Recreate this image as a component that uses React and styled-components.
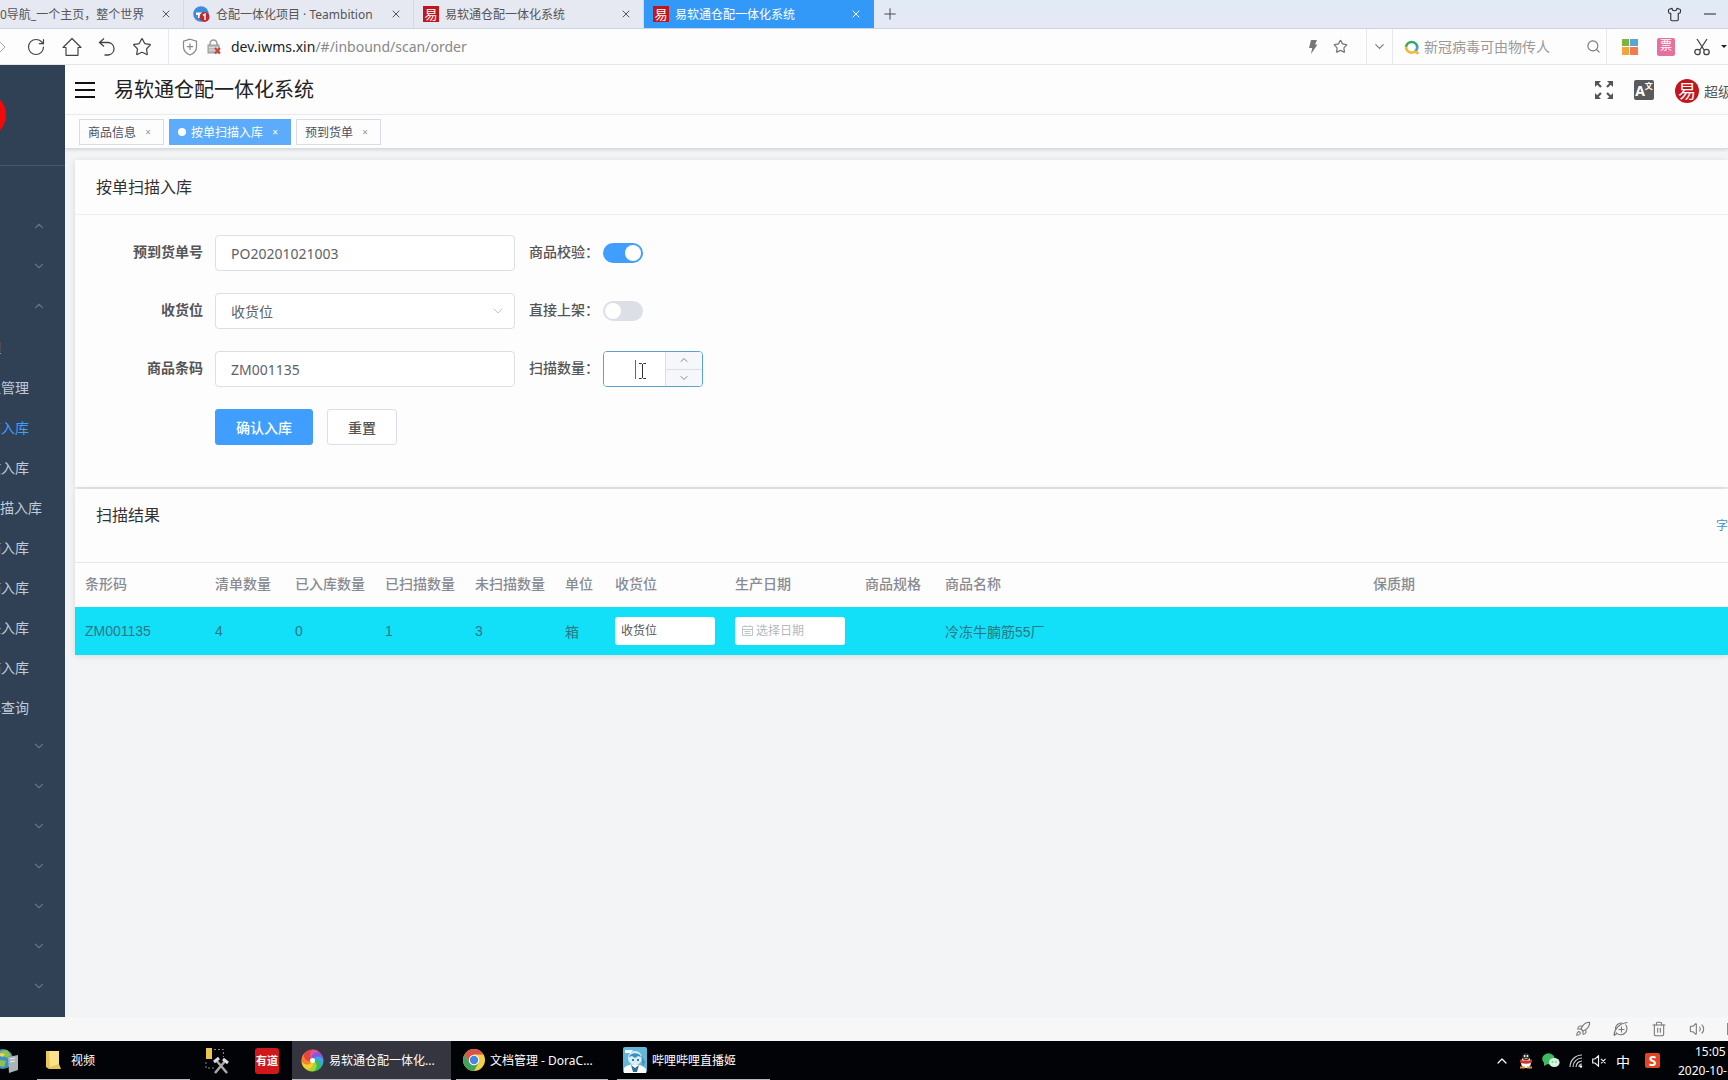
import React, { useState } from "react";
import styled, { createGlobalStyle, css } from "styled-components";
import {
  ChevronDown,
  ChevronUp,
  Plus,
  RotateCw,
  Search,
  Shirt,
  Star,
  Trash2,
  Rocket,
  Volume2,
  X,
} from "lucide-react";

const GlobalStyle = createGlobalStyle`
  * {
    box-sizing: border-box;
  }
  body {
    margin: 0;
    overflow: hidden;
    background: #f3f4f5;
  }
  body, input, button, select {
    font-family: "Noto Sans", "Noto Sans CJK SC", sans-serif;
  }
  button {
    padding: 0;
    border: 0;
    background: none;
    color: inherit;
    cursor: pointer;
  }
  svg {
    display: block;
    flex: none;
  }
`;

const browserTabs = [
  { title: "0导航_一个主页，整个世界", icon: null },
  { title: "仓配一体化项目 · Teambition", icon: "teambition" },
  { title: "易软通仓配一体化系统", icon: "seal" },
  { title: "易软通仓配一体化系统", icon: "seal", active: true },
];

const menu = [
  { arrow: "up" },
  { arrow: "down" },
  { arrow: "up" },
  { text: "管理", inset: 64 },
  { text: "位管理", inset: 36 },
  { text: "描入库", inset: 36, active: true },
  { text: "收入库", inset: 36 },
  { text: "描入库", inset: 23 },
  { text: "描入库", inset: 36 },
  { text: "描入库", inset: 36 },
  { text: "任入库", inset: 36 },
  { text: "描入库", inset: 36 },
  { text: "单查询", inset: 36 },
  { arrow: "down" },
  { arrow: "down" },
  { arrow: "down" },
  { arrow: "down" },
  { arrow: "down" },
  { arrow: "down" },
  { arrow: "down" },
];

const tags = [
  { title: "商品信息" },
  { title: "按单扫描入库", active: true },
  { title: "预到货单" },
];

const columns = [
  { title: "条形码", width: 130 },
  { title: "清单数量", width: 80 },
  { title: "已入库数量", width: 90 },
  { title: "已扫描数量", width: 90 },
  { title: "未扫描数量", width: 90 },
  { title: "单位", width: 50 },
  { title: "收货位", width: 120 },
  { title: "生产日期", width: 130 },
  { title: "商品规格", width: 80 },
  { title: "商品名称", width: 428 },
  { title: "保质期" },
];

/* ---------- icons ---------- */

const HomeIcon = () => (
  <svg width="20" height="20" viewBox="0 0 20 20" fill="none" stroke="#444" strokeWidth="1.2">
    <path d="M1 10.500 10 1.500 19 10.500H16V18.300H4V10.500Z" strokeLinejoin="round" />
  </svg>
);

const UndoIcon = () => (
  <svg width="18" height="20" viewBox="0 0 18 20" fill="none" stroke="#444" strokeWidth="1.300">
    <path d="M6 1.500 1.500 5.500 6 9.500M1.500 5.500H10.500A6.300 6.300 0 0 1 10.500 18H6.500" />
  </svg>
);

const ShieldIcon = () => (
  <svg width="16" height="18" viewBox="0 0 16 18" fill="none" stroke="#888" strokeWidth="1.200">
    <path d="M8 1.200 14.500 3.200V9C14.500 13 11.500 15.500 8 17 4.500 15.500 1.500 13 1.500 9V3.200Z" />
    <path d="M8 5.500V12M4.800 8.700H11.200" />
  </svg>
);

const LockIcon = () => (
  <svg width="15" height="16" viewBox="0 0 15 16">
    <path d="M3 7V4.500A3.500 3.500 0 0 1 10 4.500V7" fill="none" stroke="#999" strokeWidth="1.500" />
    <rect x="1" y="6" width="11" height="8" fill="#bbb" stroke="#999" />
    <path d="M2 8.500H11M2 11H11" stroke="#ddd" />
    <path d="M8 9 13 14.500M13 9 8 14.500" stroke="#c4473a" strokeWidth="2" />
  </svg>
);

const BoltIcon = () => (
  <svg width="10" height="14" viewBox="0 0 10 14" fill="#777">
    <path d="M3 0H9L7 4.500H9.500L3 14 4.200 8H1Z" />
  </svg>
);

const RingIcon = () => (
  <svg width="16" height="16" viewBox="0 0 16 16" fill="none" strokeWidth="2.600">
    <path d="M2 8A5.700 5.700 0 0 1 13.300 8" stroke="#2fa86b" />
    <path d="M13.300 7.500A5.700 5.700 0 0 1 10.500 12.700" stroke="#41a9d5" />
    <path d="M2 7.500A5.700 5.700 0 0 0 11 12.500L14.500 14.500" stroke="#f0b93a" />
  </svg>
);

const AppsIcon = () => (
  <svg width="16" height="16" viewBox="0 0 16 16">
    <rect width="7" height="7" fill="#7fb43c" />
    <rect x="8" width="8" height="7" fill="#58a5d8" />
    <rect y="8" width="7" height="8" fill="#f0a63e" />
    <rect x="8" y="8" width="8" height="8" fill="#ee7d52" />
  </svg>
);

const ScissorsIcon = () => (
  <svg width="16" height="18" viewBox="0 0 16 18" fill="none" stroke="#444" strokeWidth="1.300">
    <path d="M3 1 10.500 12.500M13 1 5.500 12.500" />
    <circle cx="3.500" cy="14" r="2.700" />
    <circle cx="12.500" cy="14" r="2.700" />
  </svg>
);

const TeambitionIcon = () => (
  <svg width="17" height="17" viewBox="0 0 17 17">
    <circle cx="8" cy="8" r="7.800" fill="#3b8ddb" />
    <path d="M3 6.500H9V9H7.500V12H5V9H3Z" fill="#fff" />
    <circle cx="11.500" cy="11" r="5" fill="#c3262b" />
    <path d="M10 9.500 12 8.200V14" stroke="#fff" strokeWidth="1.500" fill="none" />
  </svg>
);

const FullscreenIcon = () => (
  <svg width="18" height="18" viewBox="0 0 18 18" fill="#555" stroke="#555" strokeWidth="2.200">
    <path d="M0 0H6L0 6ZM18 0H12L18 6ZM0 18V12L6 18ZM18 18V12L12 18Z" stroke="none" />
    <path d="M2 2 6 6M16 2 12 6M2 16 6 12M16 16 12 12" />
  </svg>
);

const EdgeIcon = () => (
  <svg width="16" height="16" viewBox="0 0 16 16" fill="none" stroke="#777" strokeWidth="1.100">
    <path d="M12.500 3.500A6.200 6.200 0 1 1 3 11.500M2.500 8.500A6 6 0 0 1 9 2" />
    <path d="M1 14.500C1 9 6 2 14.500 1.500M1 14.500 4 12.500M5.500 8.500H11.500M8.500 5.500V11.500" />
  </svg>
);

const BeamCursor = styled.svg`
  position: absolute;
  left: 31px;
  top: 8px;
  pointer-events: none;
`;

const GlobeServerIcon = () => (
  <svg width="20" height="24" viewBox="0 0 20 24">
    <circle cx="3" cy="10" r="10" fill="#3c8ec4" />
    <path d="M0 2 7 1 11 6 7 9 2 6ZM0 11 6 12 4 18 0 17Z" fill="#8fc24c" />
    <path d="M0 4 5 5 3 8 0 7Z" fill="#eed460" />
    <path d="M8 8 18 6V21L9 24Z" fill="#aab3b8" />
    <path d="M10 10 15 9M10 13 15 12" stroke="#eee" />
  </svg>
);

const FolderIcon = () => (
  <svg width="16" height="20" viewBox="0 0 16 20">
    <path d="M0 1H13V14L15 19H3L0 17Z" fill="#e9c65a" />
    <path d="M3 1H13V14L4 17Z" fill="#f8e28c" />
  </svg>
);

const ToolsIcon = () => (
  <svg width="24" height="26" viewBox="0 0 24 26" fill="none">
    <rect x="1" width="6" height="11" fill="#ecc54e" />
    <path d="M9 1.500H18.500V9M1 14V20H9" stroke="#888" strokeDasharray="2 2" />
    <path d="M11 12 22 25M21 12 10 25" stroke="#aaa" strokeWidth="2.500" />
    <path d="M9 14 14 10M18 11 23 15" stroke="#ddd" strokeWidth="3" />
  </svg>
);

const PinwheelIcon = () => (
  <svg width="23" height="23" viewBox="0 0 23 23">
    {["#e0559b", "#8d55d3", "#39a7e5", "#35bd64", "#a8d331", "#f6d02e", "#f5822a", "#e4453f"].map(
      (fill, i) => (
        <path
          key={fill}
          d="M11.500 11.500C6 10 6 2 11.500 .5 15 .4 18 2 19.500 4 14 3 12 7 11.500 11.500Z"
          fill={fill}
          transform={`rotate(${i * 45} 11.500 11.500)`}
        />
      )
    )}
    <circle cx="11.500" cy="11.500" r="2.500" fill="#fff" />
  </svg>
);

const ChromeIcon = () => (
  <svg width="22" height="22" viewBox="0 0 22 22">
    <circle cx="11" cy="11" r="11" fill="#f3cf45" />
    <path d="M1.500 5.500A11 11 0 0 1 20.500 5.500H11L6.300 13.700Z" fill="#d9534a" />
    <path d="M1.500 5.500A11 11 0 0 0 11 22L15.700 13.700H6.300Z" fill="#3fa35b" />
    <circle cx="11" cy="11" r="5.200" fill="#fff" />
    <circle cx="11" cy="11" r="4.200" fill="#4b85dd" />
  </svg>
);

const LiveIcon = () => (
  <svg width="24" height="26" viewBox="0 0 24 26">
    <rect width="24" height="26" rx="2" fill="#65b7da" />
    <path d="M2 3H10L8 6H2ZM1 21C6 16 18 16 23 22V26H1Z" fill="#fff" />
    <circle cx="12" cy="11" r="7" fill="#d5eef8" />
    <path d="M6 10C7 5 17 5 18 10L15 9 12 11 9 9ZM18 8 22 15 20 20" fill="#3e91bd" />
    <circle cx="10" cy="13" r="1" fill="#23506b" />
    <circle cx="15" cy="13" r="1" fill="#23506b" />
    <path d="M8 18 12 21 16 18 14 25H10Z" fill="#2d6f96" />
  </svg>
);

const PenguinIcon = () => (
  <svg width="14" height="16" viewBox="0 0 14 16">
    <ellipse cx="7" cy="9.500" rx="5" ry="5.500" fill="#fff" />
    <circle cx="7" cy="3.800" r="3.600" fill="#3a3230" />
    <circle cx="5.600" cy="3" r=".9" fill="#fff" />
    <circle cx="8.400" cy="3" r=".9" fill="#fff" />
    <path d="M4.500 5H9.500L7 6.300Z" fill="#f0a02e" />
    <path d="M1 6.500Q7 9 13 6.500V9.500Q7 12 1 9.500Z" fill="#cf3130" />
    <path d="M1 14.500H6M8 14.500H13" stroke="#e3962d" strokeWidth="2" />
  </svg>
);

const WechatIcon = () => (
  <svg width="18" height="15" viewBox="0 0 18 15">
    <ellipse cx="6.500" cy="5.800" rx="6.300" ry="5.500" fill="#3dbb62" />
    <ellipse cx="12.300" cy="9.500" rx="5.300" ry="4.600" fill="#d7f3df" />
    <path d="M2 9.500 2 13 5.500 11Z" fill="#3dbb62" />
    <circle cx="10.500" cy="9" r=".8" fill="#3dbb62" />
    <circle cx="14" cy="9" r=".8" fill="#3dbb62" />
  </svg>
);

const WifiIcon = () => (
  <svg width="14" height="14" viewBox="0 0 14 14" fill="none" stroke="#ccc" strokeWidth="1.200">
    <path d="M1 13A12 12 0 0 1 13 1M4 13A9 9 0 0 1 13 4M7 13A6 6 0 0 1 13 7M10 13A3 3 0 0 1 13 10" />
    <circle cx="12" cy="12.500" r="1.200" fill="#fff" stroke="none" />
  </svg>
);

const MuteIcon = () => (
  <svg width="15" height="12" viewBox="0 0 15 12" fill="none" stroke="#eee" strokeWidth="1.200">
    <path d="M.7 4H3L6.500 .8V11.200L3 8H.7ZM9 3.800 13.500 8.300M13.500 3.800 9 8.300" />
  </svg>
);

const CalendarIcon = () => (
  <svg width="11" height="11" viewBox="0 0 11 11" fill="none" stroke="#c0c4cc">
    <path d="M.5 1.500H10.500V10.500H.5ZM.5 4.500H10.500M3 0V2M8 0V2M2.500 6.500H8.500M2.500 8.500H8.500" />
  </svg>
);

/* ---------- browser chrome ---------- */

const Page = styled.div`
  display: flex;
  flex-direction: column;
  height: 100vh;
  overflow: hidden;
  color: #303133;
  font-size: 14px;
`;

const TabStrip = styled.div`
  display: flex;
  flex: none;
  height: 29px;
  border-bottom: 1px solid #c9d3e2;
  background: linear-gradient(#e1ebf5, #e6e8f5);
`;

const Tab = styled.div`
  display: flex;
  align-items: center;
  gap: 6px;
  width: ${(p) => (p.$first ? 184 : 230)}px;
  height: 28px;
  padding: 0 11px 0 ${(p) => (p.$first ? 0 : 9)}px;
  border-right: 1px solid ${(p) => (p.$active ? "#3399f8" : "#d3dae6")};
  background: ${(p) => (p.$active ? "#3399f8" : "#e6e9f2")};
  color: ${(p) => (p.$active ? "#fff" : "#555")};
  font-size: 12px;
  white-space: nowrap;

  span:first-of-type {
    flex: 1;
  }
`;

const Seal = styled.i`
  display: flex;
  flex: none;
  align-items: center;
  justify-content: center;
  width: ${(p) => (p.$round ? 24 : 16)}px;
  height: ${(p) => (p.$round ? 24 : 16)}px;
  border-radius: ${(p) => (p.$round ? "50%" : "0")};
  background: #c3161c;
  color: #fff;
  font-size: ${(p) => (p.$round ? 18 : 13)}px;
  font-style: normal;
  line-height: 1;
`;

const StripButton = styled.button`
  display: flex;
  align-items: center;
  justify-content: center;
  width: ${(p) => p.$width || 32}px;
`;

const Spacer = styled.div`
  flex: 1;
`;

const Toolbar = styled.div`
  display: flex;
  flex: none;
  align-items: center;
  height: 36px;
  border-bottom: 1px solid #e3e6ea;
  background: #fdfdfe;
`;

const NavButtons = styled.div`
  display: flex;
  align-items: center;
  gap: 16px;
  height: 35px;
  padding-right: 16px;
  border-right: 1px solid #e6e8ec;
  color: #444;
`;

const ForwardArrow = styled(StripButton)`
  width: 10px;
  color: #aaa;
  justify-content: flex-end;
  overflow: hidden;
`;

const Address = styled.div`
  display: flex;
  flex: 1;
  align-items: center;
  gap: 9px;
  padding-left: 13px;
  color: #888;
  font-size: 14px;

  b {
    color: #222;
    font-weight: 400;
  }
`;

const AddressTools = styled.div`
  display: flex;
  align-items: center;
  gap: 15px;
  padding-right: 18px;
  color: #777;
`;

const Divided = styled.div`
  display: flex;
  align-items: center;
  height: 35px;
  padding: 0 5px 0 ${(p) => p.$left || 5}px;
  border-left: 1px solid #e6e8ec;
  color: #777;
`;

const SearchInput = styled.input`
  width: 166px;
  padding: 0 0 0 4px;
  border: 0;
  outline: 0;
  background: none;
  font-size: 14px;

  &::placeholder {
    color: #999;
  }
`;

const Extensions = styled.div`
  display: flex;
  align-items: center;
  gap: 19px;
  height: 35px;
  padding-right: 1px;
  padding-left: 15px;
  border-left: 1px solid #e6e8ec;
  color: #333;
`;

const Ticket = styled.span`
  width: 18px;
  height: 18px;
  border-radius: 2px;
  background: #e8709c;
  color: #fff;
  font-size: 12px;
  line-height: 16px;
  text-align: center;
`;

const Caret = styled.i`
  margin-left: -8px;
  border: 3px solid transparent;
  border-top-color: #222;
  border-bottom: 0;
`;

/* ---------- application ---------- */

const Body = styled.div`
  display: flex;
  flex: 1;
  min-height: 0;
`;

const Sidebar = styled.nav`
  flex: none;
  width: 65px;
  overflow: hidden;
  background: #304156;
`;

const Brand = styled.div`
  display: flex;
  align-items: center;
  height: 101px;
  margin-bottom: 41px;
  border-bottom: 1px solid #46586f;

  i {
    width: 46px;
    height: 46px;
    margin-left: -40px;
    border-radius: 50%;
    background: #f20a0a;
  }
`;

const MenuItem = styled.button`
  display: flex;
  align-items: center;
  justify-content: flex-end;
  width: 65px;
  height: 40px;
  padding-right: ${(p) => p.$inset}px;
  color: ${(p) => (p.$active ? "#409eff" : "#bfcbd9")};
  font-size: 14px;
  white-space: nowrap;

  svg {
    margin-bottom: 2px;
    color: #617287;
  }
`;

const Main = styled.main`
  flex: 1;
  min-width: 0;
  background: #f3f4f5;
`;

const Header = styled.header`
  display: flex;
  align-items: center;
  height: 50px;
  padding-left: 10px;
  overflow: hidden;
  border-bottom: 1px solid #f0f0f2;
  background: #fdfdfe;
`;

const Burger = styled.button`
  display: flex;
  flex-direction: column;
  gap: 5px;
  width: 20px;
  margin-right: 19px;

  i {
    width: 20px;
    height: 2px;
    background: #111;
  }
`;

const SystemTitle = styled.h1`
  flex: 1;
  margin: 0;
  font-size: 20px;
  font-weight: 400;
  line-height: 28px;
  color: #222;
`;

const HeaderTools = styled.div`
  display: flex;
  align-items: center;
  gap: 21px;
`;

const LangButton = styled.button`
  display: flex;
  justify-content: center;
  width: 20px;
  height: 20px;
  border-radius: 2px;
  background: #5a5a5a;
  color: #fff;
  font-size: 14px;
  font-weight: 700;
  line-height: 22px;

  sup {
    font-size: 8px;
    line-height: 12px;
  }
`;

const User = styled.div`
  display: flex;
  align-items: center;
  gap: 5px;
  width: 53px;
  padding-top: 3px;
  overflow: hidden;
  color: #555;
  white-space: nowrap;
`;

const TagsBar = styled.div`
  display: flex;
  align-items: center;
  gap: 5px;
  height: 34px;
  padding-left: 14px;
  border-bottom: 1px solid #d8dce5;
  background: #fdfdfe;
  box-shadow: 0 1px 3px rgba(0, 0, 0, 0.12);
`;

const Tag = styled.div`
  display: flex;
  align-items: center;
  height: 26px;
  padding: 0 8px;
  border: 1px solid #d8dce5;
  color: #495060;
  font-size: 12px;

  button {
    width: 14px;
    margin-left: 5px;
    color: #999;
    font-size: 10px;
  }

  ${(p) =>
    p.$active &&
    css`
      border-color: #5cacfb;
      background: #5cacfb;
      color: #fff;

      &::before {
        content: "";
        width: 8px;
        height: 8px;
        margin-right: 5px;
        border-radius: 50%;
        background: #fff;
      }

      button {
        color: #fff;
      }
    `}
`;

const Content = styled.div`
  display: grid;
  gap: 2px;
  padding: 11px 0 0 10px;
`;

const Card = styled.section`
  min-width: 0;
  background: #fdfdfe;
  box-shadow: 0 1px 6px rgba(0, 0, 0, 0.12);
`;

const CardTitle = styled.h2`
  margin: 0;
  padding: 15px 21px;
  border-bottom: 1px solid #ebeef5;
  font-size: 16px;
  font-weight: 400;
  line-height: 24px;
`;

const Form = styled.form`
  display: grid;
  grid-template-columns: 140px 300px 88px 1fr;
  row-gap: 22px;
  padding: 20px 0 42px;
`;

const Label = styled.label`
  height: 36px;
  padding-right: ${(p) => (p.$side ? 0 : 12)}px;
  padding-left: ${(p) => (p.$side ? 14 : 0)}px;
  color: #555;
  font-weight: ${(p) => (p.$side ? 500 : 600)};
  line-height: 34px;
  text-align: ${(p) => (p.$side ? "left" : "right")};
  white-space: nowrap;
`;

const field = css`
  width: 100%;
  height: 36px;
  padding: 0 15px;
  border: 1px solid #dcdfe6;
  border-radius: 4px;
  outline: 0;
  background: #fff;
  color: #606266;
  font-size: 14px;
`;

const TextInput = styled.input`
  ${field}
`;

const SelectWrap = styled.div`
  position: relative;

  select {
    ${field}
    appearance: none;
  }

  svg {
    position: absolute;
    top: 10px;
    right: 9px;
    color: #c0c4cc;
    pointer-events: none;
  }
`;

const Switch = styled.input`
  align-self: center;
  appearance: none;
  width: 40px;
  height: 20px;
  margin: 0;
  padding: 2px;
  border-radius: 10px;
  background: #dcdfe6;
  cursor: pointer;

  &::before {
    content: "";
    display: block;
    width: 16px;
    height: 16px;
    border-radius: 50%;
    background: #fff;
  }

  &:checked {
    background: #409eff;
  }

  &:checked::before {
    margin-left: 20px;
  }
`;

const NumberBox = styled.div`
  position: relative;
  display: flex;
  width: 100px;
  height: 36px;
  overflow: hidden;
  border: 1px solid #5ba3cf;
  border-radius: 4px;
  background: #fff;

  input {
    flex: 1;
    min-width: 0;
    border: 0;
    outline: 0;
    appearance: textfield;
    text-align: center;
  }
`;

const Steps = styled.div`
  display: grid;
  width: 37px;
  border-left: 1px solid #dcdfe6;
  background: #f5f7fa;
  color: #888;

  button {
    display: flex;
    align-items: center;
    justify-content: center;
  }

  button + button {
    border-top: 1px solid #dcdfe6;
  }
`;

const Actions = styled.div`
  display: flex;
  grid-column: 2 / -1;
  gap: 14px;
`;

const Button = styled.button`
  height: 36px;
  padding: 0 20px;
  border: 1px solid ${(p) => (p.$primary ? "#409eff" : "#dcdfe6")};
  border-radius: 3px;
  background: ${(p) => (p.$primary ? "#409eff" : "#fff")};
  color: ${(p) => (p.$primary ? "#fff" : "#555")};
  font-size: 14px;
  font-weight: 500;
`;

const ResultHead = styled.div`
  display: flex;
  justify-content: space-between;
  height: 73px;
  padding: 14px 0 0 21px;

  h2 {
    margin: 0;
    font-size: 16px;
    font-weight: 400;
    line-height: 24px;
  }

  a {
    margin-top: 14px;
    color: #4a8fc0;
    font-size: 12px;
    line-height: 18px;
    text-decoration: none;
  }
`;

const Table = styled.table`
  width: 100%;
  border-collapse: collapse;
  table-layout: fixed;
  font-family: "Liberation Sans", "Noto Sans CJK SC", sans-serif;

  th,
  td {
    padding: 0 10px;
    text-align: left;
    white-space: nowrap;
  }

  th {
    height: 44px;
    padding-bottom: 3px;
    border-top: 1px solid #e6e8ee;
    color: #888b90;
    font-weight: 500;
  }

  td {
    height: 48px;
    background: #12e0f8;
    color: #2c7683;
  }
`;

const cell = css`
  height: 28px;
  border: 0;
  border-radius: 3px;
  background: #fff;
  font-size: 12px;
`;

const CellSelect = styled.select`
  ${cell}
  display: block;
  appearance: none;
  width: 100px;
  padding: 0 6px;
  color: #555;
`;

const DateField = styled.label`
  ${cell}
  display: flex;
  align-items: center;
  gap: 3px;
  width: 110px;
  padding-left: 7px;

  input {
    width: 80px;
    padding: 0;
    border: 0;
    outline: 0;
    font-size: 12px;
  }

  input::placeholder {
    color: #b4b8c0;
  }
`;

/* ---------- status bar and taskbar ---------- */

const StatusBar = styled.div`
  display: flex;
  flex: none;
  align-items: center;
  justify-content: flex-end;
  gap: 22px;
  height: 24px;
  background: #f7f7f8;
  color: #777;

  i {
    width: 1px;
    height: 12px;
    background: #888;
  }
`;

const Taskbar = styled.footer`
  display: flex;
  flex: none;
  height: 39px;
  background: #020307;
  color: #fff;
  font-size: 12px;
`;

const Task = styled.button`
  display: flex;
  align-items: center;
  gap: ${(p) => p.$gap || 5}px;
  width: ${(p) => p.$width}px;
  margin-right: ${(p) => p.$after || 0}px;
  padding-left: ${(p) => p.$left || 0}px;
  border-bottom: ${(p) => (p.$open ? "1px solid #b5b9bf" : "0")};
  background: ${(p) => (p.$active ? "#34353f" : "none")};
  font-size: 12px;
  white-space: nowrap;
`;

const Youdao = styled.span`
  width: 24px;
  height: 26px;
  border-radius: 3px;
  background: #d0181c;
  font-size: 11px;
  font-weight: 700;
  line-height: 25px;
  text-align: center;
`;

const Tray = styled.div`
  display: flex;
  align-items: center;
  gap: 9px;
`;

const Ime = styled.span`
  margin-right: 6px;
  font-size: 14px;
`;

const Sogou = styled.span`
  width: 15px;
  height: 15px;
  border-radius: 2px;
  background: #e2451f;
  font-size: 14px;
  font-weight: 700;
  line-height: 15px;
  text-align: center;
`;

const Clock = styled.time`
  width: 50px;
  margin-left: 9px;
  overflow: hidden;
  line-height: 19px;
  white-space: nowrap;

  span {
    display: block;
    padding-left: 17px;
  }
`;

const TabIcon = ({ icon }) => {
  if (icon === "teambition") return <TeambitionIcon />;
  if (icon === "seal") return <Seal>易</Seal>;
  return null;
};

const App = () => {
  const [verify, setVerify] = useState(true);
  const [direct, setDirect] = useState(false);
  const [count, setCount] = useState("");

  const step = (n) => setCount((c) => Math.max(0, Number(c) + n));

  return (
    <Page>
      <GlobalStyle />
      <TabStrip>
        {browserTabs.map((tab, i) => (
          <Tab key={i} $first={i === 0} $active={tab.active}>
            <TabIcon icon={tab.icon} />
            <span>{tab.title}</span>
            <button aria-label="关闭">
              <X size={12} strokeWidth={2} />
            </button>
          </Tab>
        ))}
        <StripButton aria-label="新标签页">
          <Plus size={18} strokeWidth={1.3} color="#444" />
        </StripButton>
        <Spacer />
        <StripButton aria-label="皮肤" $width={36}>
          <Shirt size={15} strokeWidth={1.8} />
        </StripButton>
        <StripButton aria-label="最小化" $width={36}>
          <svg width="12" height="2">
            <path d="M0 1H12" stroke="#222" />
          </svg>
        </StripButton>
      </TabStrip>

      <Toolbar>
        <NavButtons>
          <ForwardArrow aria-label="前进">
            <svg width="10" height="14" viewBox="0 0 10 14" fill="none" stroke="#aaa">
              <path d="M0 2 5 7 0 12" />
            </svg>
          </ForwardArrow>
          <button aria-label="刷新">
            <RotateCw size={20} strokeWidth={1.4} />
          </button>
          <button aria-label="主页">
            <HomeIcon />
          </button>
          <button aria-label="恢复">
            <UndoIcon />
          </button>
          <button aria-label="收藏">
            <Star size={20} strokeWidth={1.5} />
          </button>
        </NavButtons>
        <Address>
          <ShieldIcon />
          <LockIcon />
          <span>
            <b>dev.iwms.xin</b>/#/inbound/scan/order
          </span>
        </Address>
        <AddressTools>
          <BoltIcon />
          <Star size={15} strokeWidth={2} />
        </AddressTools>
        <Divided>
          <ChevronDown size={15} strokeWidth={1.8} />
        </Divided>
        <Divided $left={11}>
          <RingIcon />
          <SearchInput aria-label="搜索" placeholder="新冠病毒可由物传人" />
          <Search size={15} strokeWidth={1.8} />
        </Divided>
        <Extensions>
          <AppsIcon />
          <Ticket>票</Ticket>
          <ScissorsIcon />
          <Caret />
        </Extensions>
      </Toolbar>

      <Body>
        <Sidebar>
          <Brand>
            <i />
          </Brand>
          {menu.map((item, i) => (
            <MenuItem key={i} $active={item.active} $inset={item.inset || 19}>
              {item.arrow === "up" && <ChevronUp size={14} />}
              {item.arrow === "down" && <ChevronDown size={14} />}
              {item.text}
            </MenuItem>
          ))}
        </Sidebar>

        <Main>
          <Header>
            <Burger aria-label="菜单">
              <i />
              <i />
              <i />
            </Burger>
            <SystemTitle>易软通仓配一体化系统</SystemTitle>
            <HeaderTools>
              <button aria-label="全屏">
                <FullscreenIcon />
              </button>
              <LangButton aria-label="语言">
                A<sup>文</sup>
              </LangButton>
              <User>
                <Seal $round>易</Seal>
                <span>超级</span>
              </User>
            </HeaderTools>
          </Header>
          <TagsBar>
            {tags.map((tag) => (
              <Tag key={tag.title} $active={tag.active}>
                {tag.title}
                <button aria-label="关闭">×</button>
              </Tag>
            ))}
          </TagsBar>

          <Content>
            <Card>
              <CardTitle>按单扫描入库</CardTitle>
              <Form onSubmit={(e) => e.preventDefault()}>
                <Label htmlFor="order">预到货单号</Label>
                <TextInput id="order" defaultValue="PO20201021003" />
                <Label htmlFor="verify" $side>
                  商品校验：
                </Label>
                <Switch
                  id="verify"
                  type="checkbox"
                  checked={verify}
                  onChange={(e) => setVerify(e.target.checked)}
                />

                <Label htmlFor="place">收货位</Label>
                <SelectWrap>
                  <select id="place">
                    <option>收货位</option>
                  </select>
                  <ChevronDown size={16} strokeWidth={1.5} />
                </SelectWrap>
                <Label htmlFor="direct" $side>
                  直接上架：
                </Label>
                <Switch
                  id="direct"
                  type="checkbox"
                  checked={direct}
                  onChange={(e) => setDirect(e.target.checked)}
                />

                <Label htmlFor="barcode">商品条码</Label>
                <TextInput id="barcode" defaultValue="ZM001135" />
                <Label htmlFor="count" $side>
                  扫描数量：
                </Label>
                <NumberBox>
                  <input
                    id="count"
                    type="number"
                    value={count}
                    onChange={(e) => setCount(e.target.value)}
                  />
                  <Steps>
                    <button type="button" aria-label="增加" onClick={() => step(1)}>
                      <ChevronUp size={12} strokeWidth={2} />
                    </button>
                    <button type="button" aria-label="减少" onClick={() => step(-1)}>
                      <ChevronDown size={12} strokeWidth={2} />
                    </button>
                  </Steps>
                  <BeamCursor width="12" height="20" fill="none" stroke="#333">
                    <path d="M.5 0V19" stroke="#666" />
                    <path d="M4 3.500H6.500L7.500 4.500 8.500 3.500H11M7.500 4V18M4 18.500H6.500L7.500 17.500 8.500 18.500H11" />
                  </BeamCursor>
                </NumberBox>

                <Actions>
                  <Button type="submit" $primary>
                    确认入库
                  </Button>
                  <Button type="reset">重置</Button>
                </Actions>
              </Form>
            </Card>

            <Card>
              <ResultHead>
                <h2>扫描结果</h2>
                <a href="#fields">字</a>
              </ResultHead>
              <Table>
                <colgroup>
                  {columns.map((c) => (
                    <col key={c.title} width={c.width} />
                  ))}
                </colgroup>
                <thead>
                  <tr>
                    {columns.map((c) => (
                      <th key={c.title}>{c.title}</th>
                    ))}
                  </tr>
                </thead>
                <tbody>
                  <tr>
                    <td>ZM001135</td>
                    <td>4</td>
                    <td>0</td>
                    <td>1</td>
                    <td>3</td>
                    <td>箱</td>
                    <td>
                      <CellSelect aria-label="收货位">
                        <option>收货位</option>
                      </CellSelect>
                    </td>
                    <td>
                      <DateField>
                        <CalendarIcon />
                        <input aria-label="生产日期" placeholder="选择日期" />
                      </DateField>
                    </td>
                    <td />
                    <td>冷冻牛腩筋55厂</td>
                    <td />
                  </tr>
                </tbody>
              </Table>
            </Card>
          </Content>
        </Main>
      </Body>

      <StatusBar>
        <Rocket size={16} strokeWidth={1.6} />
        <EdgeIcon />
        <Trash2 size={16} strokeWidth={1.6} />
        <Volume2 size={16} strokeWidth={1.6} />
        <i />
      </StatusBar>

      <Taskbar>
        <Task aria-label="服务器" $width={37}>
          <GlobeServerIcon />
        </Task>
        <Task $width={153} $after={15} $left={9} $gap={9} $open>
          <FolderIcon />
          视频
        </Task>
        <Task aria-label="工具" $width={50}>
          <ToolsIcon />
        </Task>
        <Task $width={37}>
          <Youdao>有道</Youdao>
        </Task>
        <Task $width={159} $after={5} $left={9} $open $active>
          <PinwheelIcon />
          易软通仓配一体化...
        </Task>
        <Task $width={152} $after={9} $left={7} $open>
          <ChromeIcon />
          文档管理 - DoraC...
        </Task>
        <Task $width={153} $left={6} $open>
          <LiveIcon />
          哔哩哔哩直播姬
        </Task>
        <Spacer />
        <Tray>
          <ChevronUp size={16} strokeWidth={1.8} />
          <PenguinIcon />
          <WechatIcon />
          <WifiIcon />
          <MuteIcon />
          <Ime>中</Ime>
          <Sogou>S</Sogou>
          <Clock>
            <span>15:05</span>
            2020-10-
          </Clock>
        </Tray>
      </Taskbar>
    </Page>
  );
};

export default App;
